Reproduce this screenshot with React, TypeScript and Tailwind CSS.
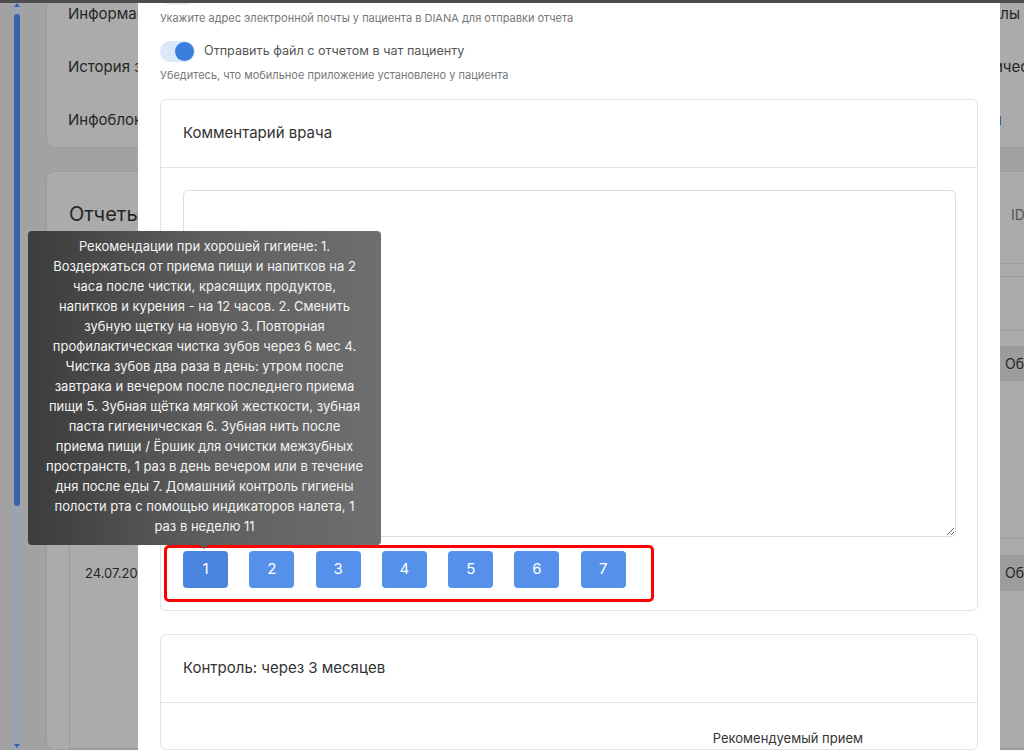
import React from 'react'

const TIP = [
  'Рекомендации при хорошей гигиене: 1.',
  'Воздержаться от приема пищи и напитков на 2',
  'часа после чистки, красящих продуктов,',
  'напитков и курения - на 12 часов. 2. Сменить',
  'зубную щетку на новую 3. Повторная',
  'профилактическая чистка зубов через 6 мес 4.',
  'Чистка зубов два раза в день: утром после',
  'завтрака и вечером после последнего приема',
  'пищи 5. Зубная щётка мягкой жесткости, зубная',
  'паста гигиеническая 6. Зубная нить после',
  'приема пищи / Ёршик для очистки межзубных',
  'пространств, 1 раз в день вечером или в течение',
  'дня после еды 7. Домашний контроль гигиены',
  'полости рта с помощью индикаторов налета, 1',
  'раз в неделю 11',
]

const NUMS = [1, 2, 3, 4, 5, 6, 7]

const NAV: { left: string; right: string; cls: string }[] = [
  { left: 'Информация о пациенте', right: 'Файлы',       cls: 'text-right' },
  { left: 'История записей',       right: 'Технические', cls: 'pl-[50px]' },
  { left: 'Инфоблоки',             right: 'Перейти',     cls: 'text-right pr-[18px] text-[#2d4f95]' },
]

/* ---------- затемнённая страница под модалкой ---------- */
function BackPage () {
  return (
    <div className="flex h-full">
      <div className="w-[12px] shrink-0" />
      {/* скроллбар */}
      <div className="relative h-full w-[10px] shrink-0 bg-[#9ba3b1]">
        <div className="absolute left-[2px] top-[3px] h-0 w-0 border-x-[3px] border-b-[4px] border-x-transparent border-b-[#3a62aa]" />
        <div className="absolute left-[2px] top-[14px] h-[492px] w-[6px] rounded-full bg-[#3a62aa]" />
        <div className="absolute bottom-[2px] left-[2px] h-0 w-0 border-x-[3px] border-t-[4px] border-x-transparent border-t-[#3a62aa]" />
      </div>

      <div className="ml-[24px] mt-[-30px] flex w-[1034px] shrink-0 flex-col gap-[23px] text-[#262626]">
        {/* карточка навигации */}
        <div className="flex flex-col rounded-lg border border-[#9c9c9c] bg-[#ababab] pl-[21px] pr-[59px] pt-[17px]">
          {NAV.map(r => (
            <div key={r.left} className="flex h-[53px] items-center justify-between text-[15px]">
              <span>{r.left}</span>
              <span className={`w-[110px] whitespace-nowrap ${r.cls}`}>{r.right}</span>
            </div>
          ))}
        </div>

        {/* карточка отчётов */}
        <div className="flex flex-col rounded-lg border border-[#9c9c9c] bg-[#ababab] px-[22px] pt-[27px]">
          <div className="flex items-center justify-between">
            <h2 className="text-[20px] leading-[30px]">Отчеты</h2>
            <span className="w-[46px] text-[14px] text-[#555]">ID</span>
          </div>
          <div className="mt-[34px] flex flex-col border-l border-[#9c9c9c] text-[13px]">
            <div className="h-[14px] border-y border-[#9c9c9c]" />
            <div className="h-[54px] border-b border-[#9c9c9c]" />
            <div className="flex h-[208px] items-start justify-between border-b border-[#9c9c9c] pl-[15px] pt-[15px]">
              <span className="leading-[35px]">24.07.2024</span>
              <span className="w-[60px] bg-[#9c9c9c] pl-[8px] text-[14px] leading-[35px]">Обзор</span>
            </div>
            <div className="flex h-[210px] items-start justify-between border-b border-[#9c9c9c] pl-[15px] pt-[16px]">
              <span className="leading-[36px]">24.07.2024</span>
              <span className="w-[60px] bg-[#9c9c9c] pl-[8px] text-[14px] leading-[36px]">Обзор</span>
            </div>
          </div>
        </div>
      </div>
    </div>
  )
}

/* ---------- модальное окно ---------- */
function Modal () {
  return (
    <div className="absolute left-[138px] top-0 h-full w-[862px] overflow-hidden bg-white px-[22px]">
      <div className="mt-[-15px] flex flex-col">
        <div className="h-[20px] w-[35px] rounded-full bg-[#ebedf0]" />

        <p className="mt-[5px] text-[11px] leading-[16px] text-[#777]">
          Укажите адрес электронной почты у пациента в DIANA для отправки отчета
        </p>

        <label className="mt-[15px] flex h-[21px] items-center gap-[9px]">
          <span className="flex h-[21px] w-[35px] items-center justify-end rounded-full bg-[#dce7fa] pr-[1px]">
            <span className="h-[19px] w-[19px] rounded-full bg-[#3b7ddd]" />
          </span>
          <span className="text-[12.6px] text-[#555]">Отправить файл с отчетом в чат пациенту</span>
        </label>

        <p className="mt-[5px] text-[11px] leading-[16px] text-[#777]">
          Убедитесь, что мобильное приложение установлено у пациента
        </p>

        {/* комментарий врача */}
        <div className="mt-[16px] w-[818px] rounded-[6px] border border-[#e4e4e4]">
          <div className="flex h-[68px] items-center border-b border-[#e4e4e4] px-[22px] text-[15px] text-[#333]">
            Комментарий врача
          </div>
          <div className="relative px-[22px] pb-[22px] pt-[22px]">
            <textarea className="block h-[347px] w-[773px] rounded-[5px] border border-[#dedede] outline-none" />
            <div className="mt-[14px] flex gap-[21.3px]">
              {NUMS.map(n => (
                <button
                  key={n}
                  className={`h-[37px] w-[45px] rounded-[4px] text-[15px] text-white ${n === 1 ? 'bg-[#4a84df]' : 'bg-[#5590ea]'}`}
                >
                  {n}
                </button>
              ))}
            </div>
            {/* красная рамка-выделение */}
            <div className="absolute left-[3px] top-[377px] h-[57px] w-[490px] rounded-[5px] border-[3px] border-[#ff0000]" />
          </div>
        </div>

        {/* контроль */}
        <div className="mt-[23px] w-[818px] rounded-[6px] border border-[#e4e4e4]">
          <div className="flex h-[68px] items-center border-b border-[#e4e4e4] px-[22px] text-[15px] text-[#333]">
            Контроль: через 3 месяцев
          </div>
          <div className="flex justify-end pr-[114px] pt-[26px] text-[13px] text-[#333]">
            Рекомендуемый прием
          </div>
        </div>
      </div>
    </div>
  )
}

export default function App () {
  return (
    <div className="relative h-[750px] w-[1024px] overflow-hidden bg-[#a2a2a2] font-['Inter',sans-serif]">
      <BackPage />
      <Modal />

      {/* подсказка */}
      <div className="absolute left-[28px] top-[231px] w-[353px] rounded-[4px] bg-gradient-to-r from-[#3c3c3c] via-[#5e5e5e] to-[#6f6f6f] pb-[9px] pt-[5px] text-center text-[13px] leading-[20px] text-[#f3f3f3]">
        {TIP.map((t, i) => <div key={i}>{t}</div>)}
        <div className="absolute left-[172px] top-full h-0 w-0 border-x-[4px] border-t-[4px] border-x-transparent border-t-[#5a5a5a]" />
      </div>

      {/* верхняя полоса окна */}
      <div className="absolute left-0 top-0 h-[3px] w-full bg-[#4d4d4d]" />
    </div>
  )
}
